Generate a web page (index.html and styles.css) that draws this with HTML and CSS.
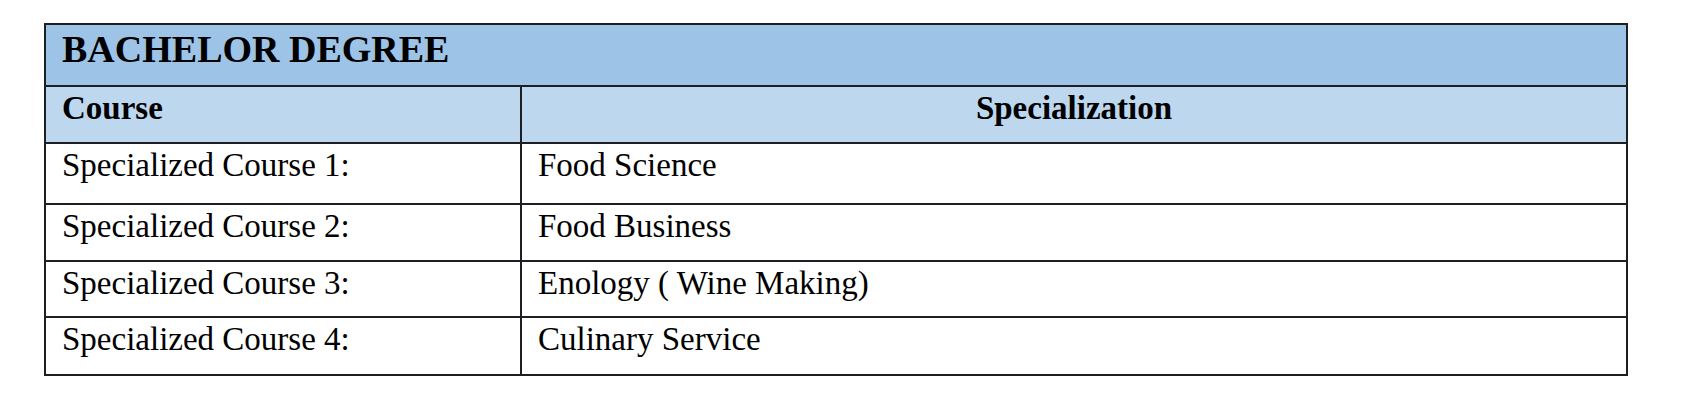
FILE: index.html
```html
<!DOCTYPE html>
<html lang="en">
<head>
<meta charset="utf-8">
<title>Bachelor Degree</title>
<link rel="stylesheet" href="styles.css">
</head>
<body>
<table class="degree">
  <colgroup>
    <col class="col-course">
    <col class="col-spec">
  </colgroup>
  <tr class="row-title">
    <th class="title" colspan="2">BACHELOR DEGREE</th>
  </tr>
  <tr class="row-head">
    <th class="head-left">Course</th>
    <th class="head-center">Specialization</th>
  </tr>
  <tr class="row-first">
    <td>Specialized Course 1:</td>
    <td>Food Science</td>
  </tr>
  <tr class="row-a">
    <td>Specialized Course 2:</td>
    <td>Food Business</td>
  </tr>
  <tr class="row-b">
    <td>Specialized Course 3:</td>
    <td>Enology ( Wine Making)</td>
  </tr>
  <tr class="row-last">
    <td>Specialized Course 4:</td>
    <td>Culinary Service</td>
  </tr>
</table>
</body>
</html>
```

FILE: styles.css
```css
html, body {
  margin: 0;
  padding: 0;
  background: #ffffff;
}

body {
  padding: 23px 0 0 44px;
  font-family: "Liberation Serif", "Times New Roman", serif;
  color: #000000;
}

.degree {
  border-collapse: collapse;
  width: 1584px;
  table-layout: fixed;
}

.col-course {
  width: 476px;
}

.degree th,
.degree td {
  border: 2px solid #1e1f22;
  vertical-align: top;
  text-align: left;
  padding: 2px 16px 0 16px;
  font-size: 33px;
  line-height: 38px;
  font-weight: normal;
}

.degree th {
  font-weight: bold;
}

.row-title th {
  background: #9dc3e6;
  font-size: 38px;
  line-height: 44px;
  padding-top: 2px;
}

.row-head th {
  background: #bdd7ee;
}

.degree .head-center {
  text-align: center;
}

.row-title { height: 62px; }
.row-head { height: 57px; }
.row-first { height: 61px; }
.row-a { height: 57px; }
.row-b { height: 56px; }
.row-last { height: 58px; }
```
